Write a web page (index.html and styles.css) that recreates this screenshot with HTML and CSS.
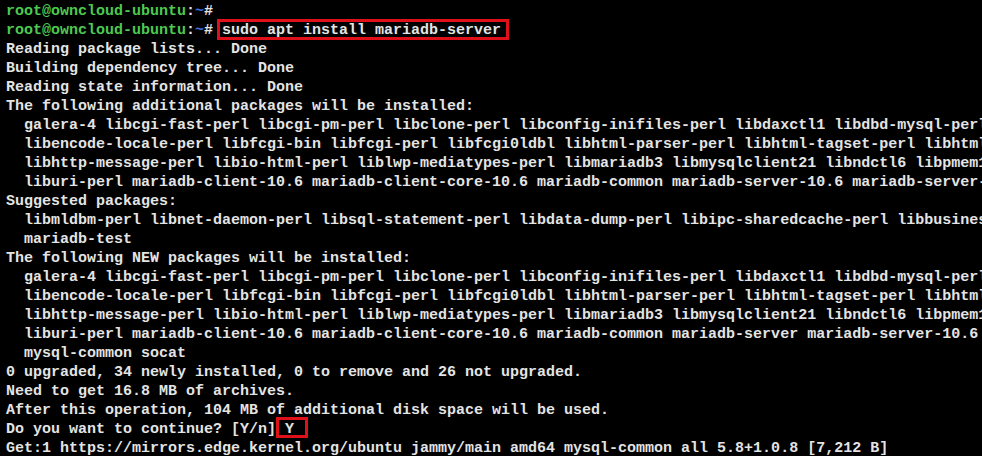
FILE: index.html
```html
<!DOCTYPE html>
<html>
<head>
<meta charset="utf-8">
<link rel="stylesheet" href="styles.css">
</head>
<body>
<pre class="term"><span class="user">root@owncloud-ubuntu</span>:<span class="path">~</span>#
<span class="user">root@owncloud-ubuntu</span>:<span class="path">~</span># <span class="mark mark-cmd">sudo apt install mariadb-server</span>
Reading package lists... Done
Building dependency tree... Done
Reading state information... Done
The following additional packages will be installed:
  galera-4 libcgi-fast-perl libcgi-pm-perl libclone-perl libconfig-inifiles-perl libdaxctl1 libdbd-mysql-perl libdbi-perl
  libencode-locale-perl libfcgi-bin libfcgi-perl libfcgi0ldbl libhtml-parser-perl libhtml-tagset-perl libhtml-template-perl
  libhttp-message-perl libio-html-perl liblwp-mediatypes-perl libmariadb3 libmysqlclient21 libndctl6 libpmem1 libsnappy1v5
  liburi-perl mariadb-client-10.6 mariadb-client-core-10.6 mariadb-common mariadb-server-10.6 mariadb-server-core-10.6
Suggested packages:
  libmldbm-perl libnet-daemon-perl libsql-statement-perl libdata-dump-perl libipc-sharedcache-perl libbusiness-isbn-perl
  mariadb-test
The following NEW packages will be installed:
  galera-4 libcgi-fast-perl libcgi-pm-perl libclone-perl libconfig-inifiles-perl libdaxctl1 libdbd-mysql-perl libdbi-perl
  libencode-locale-perl libfcgi-bin libfcgi-perl libfcgi0ldbl libhtml-parser-perl libhtml-tagset-perl libhtml-template-perl
  libhttp-message-perl libio-html-perl liblwp-mediatypes-perl libmariadb3 libmysqlclient21 libndctl6 libpmem1 libsnappy1v5
  liburi-perl mariadb-client-10.6 mariadb-client-core-10.6 mariadb-common mariadb-server mariadb-server-10.6
  mysql-common socat
0 upgraded, 34 newly installed, 0 to remove and 26 not upgraded.
Need to get 16.8 MB of archives.
After this operation, 104 MB of additional disk space will be used.
Do you want to continue? [Y/n] <span class="mark mark-yes">Y</span>
Get:1 https://mirrors.edge.kernel.org/ubuntu jammy/main amd64 mysql-common all 5.8+1.0.8 [7,212 B]</pre>
</body>
</html>
```
FILE: styles.css
```css
html, body {
  margin: 0;
  padding: 0;
  background: #000;
  overflow: hidden;
}
.term {
  margin: 0;
  padding: 2px 0 0 6px;
  font-family: "Liberation Mono", "DejaVu Sans Mono", monospace;
  font-size: 15px;
  font-weight: bold;
  line-height: 19px;
  color: #e4e4e4;
  white-space: pre;
  overflow: hidden;
}
.user {
  color: #4ec94e;
}
.path {
  color: #3d6fe0;
}
.mark {
  position: relative;
}
.mark::after {
  content: "";
  position: absolute;
  border: 3px solid #e0101a;
  pointer-events: none;
}
.mark-cmd::after {
  left: -5px;
  right: -8px;
  top: -3px;
  bottom: -1px;
}
.mark-yes::after {
  left: -9px;
  right: -14px;
  top: -4px;
  bottom: 0px;
}
```
